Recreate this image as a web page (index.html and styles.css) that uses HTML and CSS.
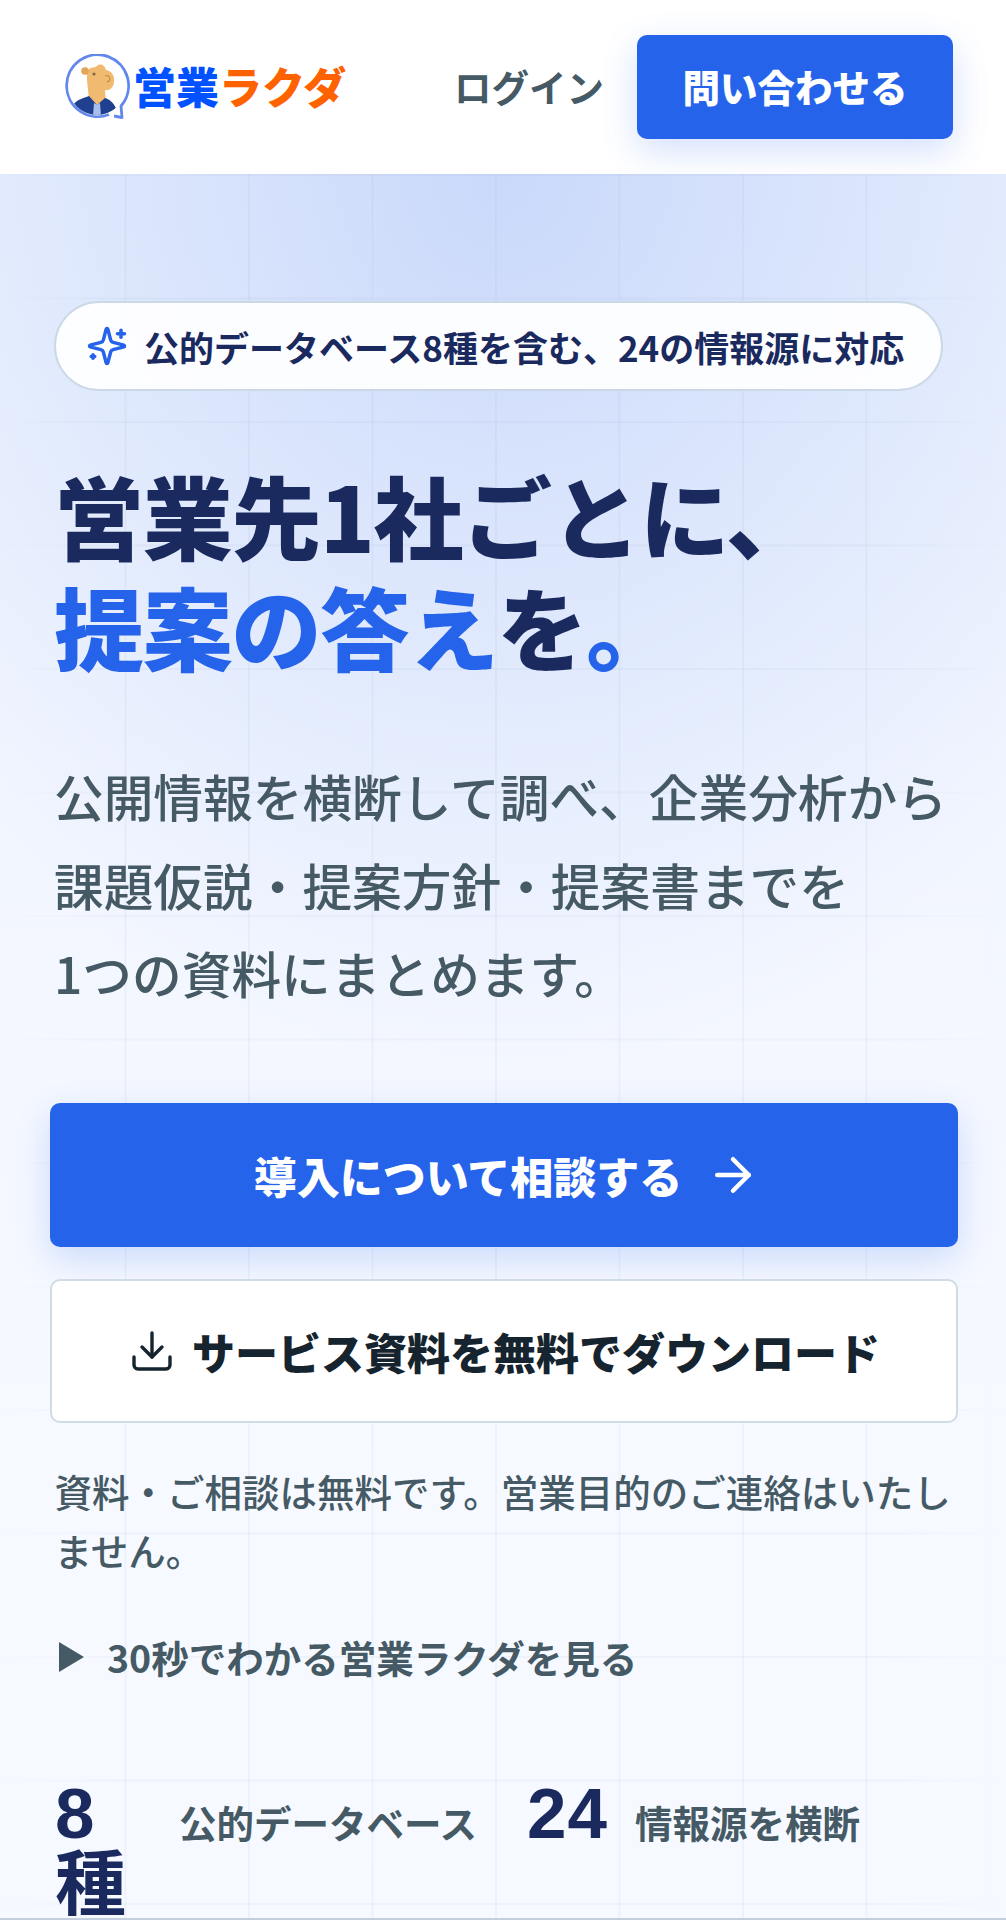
FILE: index.html
```html
<!DOCTYPE html>
<html lang="ja">

<head>
    <meta charset="UTF-8">
    <title>営業ラクダ</title>
    <link rel="stylesheet" href="styles.css">
</head>

<body>
    <header class="topbar">
        <a href="#" class="logo">
            <svg class="logo-mark" viewBox="0 0 66 66" aria-hidden="true">
                <defs>
                    <clipPath id="logo-clip"><circle cx="33" cy="32.5" r="28.5"></circle></clipPath>
                </defs>
                <circle cx="33" cy="32.5" r="31" fill="#fff"></circle>
                <g clip-path="url(#logo-clip)">
                    <path d="M23 17C27 12 31 14 33 12C36 9 41 11 42 16C47 17 51 21 50 27C50 33 46 37 41 36L42 50L25 50C25 40 23 30 23 24Z" fill="#f0bb70"></path>
                    <circle cx="21" cy="17" r="3.800" fill="#dfa65c"></circle>
                    <circle cx="30" cy="20" r="1.600" fill="#7d6a4a"></circle>
                    <path d="M41 22C46 20 48 27 43 28" fill="none" stroke="#c98f45" stroke-width="1.300"></path>
                    <path d="M8 52C13 45 20 44 25 42L33 51L41 44C45 45 49 48 52 54C46 60 39 62 33 62C23 62 14 59 8 52Z" fill="#1f3f8f"></path>
                    <path d="M30 49L33 51L36 49L37 62L29 62Z" fill="#a9c0ef"></path>
                </g>
                <path d="M45 60.500A31 31 0 1 1 57 52L58 63.500L50 62" fill="none" stroke="#6388ec" stroke-width="2.800" stroke-linejoin="round"></path>
            </svg>
            <span class="logo-text"><span class="logo-blue">営業</span><span class="logo-orange">ラクダ</span></span>
        </a>
        <a href="#" class="login">ログイン</a>
        <a href="#" class="btn-contact">問い合わせる</a>
    </header>

    <main class="hero">
        <div class="pill">
            <svg class="pill-icon" viewBox="0 0 24 24" fill="none" stroke="currentColor" stroke-width="2" stroke-linecap="round" stroke-linejoin="round" aria-hidden="true">
                <path d="M9.937 15.500A2 2 0 0 0 8.500 14.063l-6.135-1.582a.5.5 0 0 1 0-.962L8.500 9.936A2 2 0 0 0 9.937 8.500l1.582-6.135a.5.5 0 0 1 .963 0L14.063 8.500A2 2 0 0 0 15.500 9.937l6.135 1.581a.5.5 0 0 1 0 .964L15.500 14.063a2 2 0 0 0-1.437 1.437l-1.582 6.135a.5.5 0 0 1-.963 0z"></path>
                <path d="M20 3v4"></path>
                <path d="M22 5h-4"></path>
                <path d="M4 17v2"></path>
                <path d="M5 18H3"></path>
            </svg>
            <span>公的データベース8種を含む、24の情報源に対応</span>
        </div>

        <h1 class="title">営業先1社ごとに、<br><span class="title-accent">提案の答え</span>を<span class="title-accent">。</span></h1>

        <p class="lead">公開情報を横断して調べ、企業分析から<br>課題仮説・提案方針・提案書までを<br>1つの資料にまとめます。</p>

        <div class="actions">
            <a href="#" class="btn btn-primary">
                <span>導入について相談する</span>
                <svg class="btn-arrow" viewBox="0 0 24 24" fill="none" stroke="currentColor" stroke-width="2" stroke-linecap="round" stroke-linejoin="round" aria-hidden="true">
                    <path d="M5 12h14"></path>
                    <path d="m12 5 7 7-7 7"></path>
                </svg>
            </a>
            <a href="#" class="btn btn-secondary">
                <svg class="btn-download" viewBox="0 0 24 24" fill="none" stroke="currentColor" stroke-width="1.700" stroke-linecap="round" stroke-linejoin="round" aria-hidden="true">
                    <path d="M21 15v4a2 2 0 0 1-2 2H5a2 2 0 0 1-2-2v-4"></path>
                    <path d="m7 10 5 5 5-5"></path>
                    <path d="M12 15V3"></path>
                </svg>
                <span>サービス資料を無料でダウンロード</span>
            </a>
        </div>

        <p class="note">資料・ご相談は無料です。営業目的のご連絡はいたしません。</p>

        <a href="#" class="video-link"><span class="video-arrow"></span>30秒でわかる営業ラクダを見る</a>

        <div class="stats">
            <div class="stat stat-first">
                <span class="stat-num">8種</span>
                <span class="stat-label">公的データベース</span>
            </div>
            <div class="stat">
                <span class="stat-num">24</span>
                <span class="stat-label">情報源を横断</span>
            </div>
        </div>
    </main>
</body>

</html>
```

FILE: styles.css
```css
* {
    box-sizing: border-box;
}

html,
body {
    margin: 0;
    height: 1920px;
    overflow: hidden;
}

body {
    font-family: "Noto Sans CJK JP", "Noto Sans", sans-serif;
    color: #455a64;
    background-color: #fff;
}

a {
    text-decoration: none;
    color: inherit;
}

.topbar {
    display: flex;
    align-items: center;
    height: 174px;
    padding: 0 53px 0 64px;
    background-color: #fff;
}

.logo {
    display: flex;
    align-items: center;
    gap: 3px;
    margin-right: auto;
}

.logo-mark {
    width: 66px;
    height: 66px;
}

.logo-text {
    padding-bottom: 4px;
    font-size: 43px;
    font-weight: 900;
    line-height: 1;
}

.logo-blue {
    color: #0051ff;
}

.logo-orange {
    color: #ff6200;
}

.login {
    margin-right: 33px;
    padding-bottom: 4px;
    font-size: 37.500px;
    font-weight: 700;
}

.btn-contact {
    display: flex;
    align-items: center;
    justify-content: center;
    width: 316px;
    height: 104px;
    padding-bottom: 4px;
    border-radius: 10px;
    background-color: #2563eb;
    color: #fff;
    font-size: 37.500px;
    font-weight: 900;
    box-shadow: 0 12px 36px rgba(37, 99, 235, .2);
}

.hero {
    position: relative;
    height: 1746px;
    padding: 127px 48px 0 50px;
    border-bottom: 2px solid #c3cfdd;
    background-image:
        radial-gradient(ellipse 760px 900px at 50% 0, rgba(37, 99, 235, .18), rgba(37, 99, 235, 0) 100%),
        linear-gradient(#eef3fe, #f6f9ff 70%);
}

.hero::before {
    content: "";
    position: absolute;
    inset: 0;
    background-image:
        linear-gradient(to right, rgba(120, 140, 180, .065) 2px, transparent 2px),
        linear-gradient(to bottom, rgba(120, 140, 180, .06) 2px, transparent 2px);
    background-size: 123.500px 123.500px;
    background-position: 1px 0;
    -webkit-mask-image: linear-gradient(to right, transparent, #000 12%, #000 88%, transparent);
    mask-image: linear-gradient(to right, transparent, #000 12%, #000 88%, transparent);
    pointer-events: none;
}

.hero > * {
    position: relative;
}

.pill {
    display: flex;
    align-items: center;
    gap: 16px;
    width: 889px;
    height: 90px;
    margin-left: 4px;
    padding-left: 30px;
    border: 2.500px solid #cbd9e6;
    border-radius: 45px;
    background-color: rgba(255, 255, 255, .92);
    color: #1a2a5e;
    font-size: 35px;
    font-weight: 700;
    white-space: nowrap;
}

.pill-icon {
    flex: none;
    width: 42px;
    height: 42px;
    color: #2563eb;
}

.title {
    margin: 68px 0 0 4px;
    color: #1a2a5e;
    font-size: 90px;
    font-weight: 900;
    line-height: 111px;
    letter-spacing: -1.300px;
}

.title-accent {
    color: #2563eb;
}

.lead {
    margin: 70px 0 0 4px;
    font-size: 49.700px;
    font-weight: 500;
    line-height: 88.700px;
}

.actions {
    display: flex;
    flex-direction: column;
    gap: 32px;
    margin-top: 86px;
}

.btn {
    display: flex;
    align-items: center;
    justify-content: center;
    height: 144px;
    border-radius: 10px;
    font-size: 43px;
    font-weight: 900;
}

.btn-primary {
    gap: 24px;
    padding-left: 6px;
    background-color: #2563eb;
    color: #fff;
    box-shadow: 0 12px 36px rgba(37, 99, 235, .2);
}

.btn-secondary {
    gap: 16px;
    border: 2.500px solid #cfdce5;
    background-color: #fff;
    color: #15242e;
}

.btn-arrow {
    width: 54px;
    height: 54px;
}

.btn-download {
    width: 48px;
    height: 48px;
}

.note {
    margin: 38px 0 0 4.500px;
    font-size: 37.500px;
    line-height: 59px;
    font-weight: 500;
}

.video-link {
    display: flex;
    align-items: center;
    gap: 23px;
    margin: 48px 0 0 9px;
    font-size: 37.500px;
    font-weight: 700;
    line-height: 60px;
}

.video-arrow {
    width: 0;
    height: 0;
    border-style: solid;
    border-width: 15px 0 15px 25px;
    border-color: transparent transparent transparent #455a64;
}

.stats {
    display: flex;
    align-items: baseline;
    margin: 91px 0 0 5px;
}

.stat {
    display: flex;
    align-items: baseline;
    gap: 27px;
}

.stat-first {
    width: 472px;
    gap: 52px;
}

.stat-num {
    width: min-content;
    color: #1a2a5e;
    font-family: "Liberation Sans", "Noto Sans CJK JP", sans-serif;
    font-size: 71px;
    font-weight: 700;
    line-height: 71px;
    letter-spacing: 1px;
}

.stat-label {
    font-size: 37.500px;
    font-weight: 700;
    white-space: nowrap;
}
```
